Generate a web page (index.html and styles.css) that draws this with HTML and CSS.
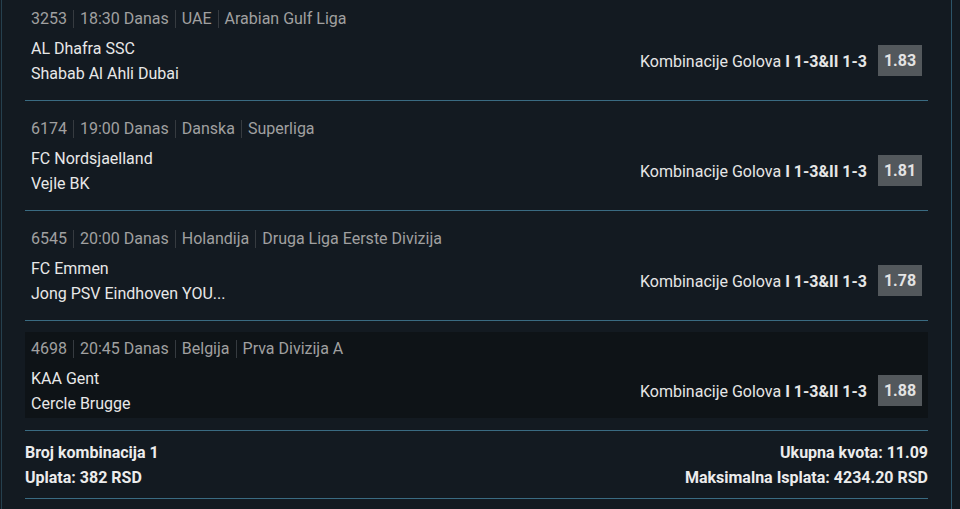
FILE: index.html
```html
<!DOCTYPE html>
<html lang="sr">
<head>
<meta charset="utf-8">
<title>Tiket</title>
<link rel="stylesheet" href="styles.css">
</head>
<body>
<div class="ticket">
  <div class="row">
    <div class="event">
      <div class="meta"><span class="m">3253</span><span class="m">18:30 Danas</span><span class="m">UAE</span><span class="m">Arabian Gulf Liga</span></div>
      <div class="body">
        <div class="teams"><div class="team">AL Dhafra SSC</div><div class="team">Shabab Al Ahli Dubai</div></div>
        <div class="bet"><span class="market">Kombinacije Golova <b>I 1-3&amp;II 1-3</b></span><span class="odd">1.83</span></div>
      </div>
    </div>
  </div>
  <div class="row">
    <div class="event">
      <div class="meta"><span class="m">6174</span><span class="m">19:00 Danas</span><span class="m">Danska</span><span class="m">Superliga</span></div>
      <div class="body">
        <div class="teams"><div class="team">FC Nordsjaelland</div><div class="team">Vejle BK</div></div>
        <div class="bet"><span class="market">Kombinacije Golova <b>I 1-3&amp;II 1-3</b></span><span class="odd">1.81</span></div>
      </div>
    </div>
  </div>
  <div class="row">
    <div class="event">
      <div class="meta"><span class="m">6545</span><span class="m">20:00 Danas</span><span class="m">Holandija</span><span class="m">Druga Liga Eerste Divizija</span></div>
      <div class="body">
        <div class="teams"><div class="team">FC Emmen</div><div class="team">Jong PSV Eindhoven YOU...</div></div>
        <div class="bet"><span class="market">Kombinacije Golova <b>I 1-3&amp;II 1-3</b></span><span class="odd">1.78</span></div>
      </div>
    </div>
  </div>
  <div class="row last">
    <div class="event active">
      <div class="meta"><span class="m">4698</span><span class="m">20:45 Danas</span><span class="m">Belgija</span><span class="m">Prva Divizija A</span></div>
      <div class="body">
        <div class="teams"><div class="team">KAA Gent</div><div class="team">Cercle Brugge</div></div>
        <div class="bet"><span class="market">Kombinacije Golova <b>I 1-3&amp;II 1-3</b></span><span class="odd">1.88</span></div>
      </div>
    </div>
  </div>
  <div class="summary">
    <div class="col"><div>Broj kombinacija 1</div><div>Uplata: 382 RSD</div></div>
    <div class="col right"><div>Ukupna kvota: 11.09</div><div>Maksimalna Isplata: 4234.20 RSD</div></div>
  </div>
</div>
</body>
</html>
```

FILE: styles.css
```css
html, body {
  margin: 0;
  padding: 0;
  background: #131a21;
  height: 509px;
  overflow: hidden;
}
body {
  font-family: Roboto, "Liberation Sans", sans-serif;
  font-size: 16px;
  color: #e6e6e6;
}
.ticket {
  margin-left: 1px;
  width: 903px;
  padding: 2px 23px 0 23px;
  border-left: 1px solid #26404e;
  border-right: 1px solid #2c5468;
  height: 507px;
}
.row {
  padding-bottom: 12px;
  border-bottom: 1px solid #3a6b82;
  margin-bottom: 11px;
}
.row.last {
  margin-bottom: 0;
}
.event {
  height: 86px;
  box-sizing: border-box;
  padding: 7px 6px 1px 6px;
}
.event.active {
  background: #0e1317;
}
.meta {
  display: flex;
  height: 20px;
  align-items: center;
  color: #a0a0a0;
  line-height: 18px;
}
.m {
  padding: 0 6px;
  border-left: 1px solid #363b40;
}
.m:first-child {
  padding-left: 0;
  border-left: 0;
}
.body {
  margin-top: 7px;
  display: flex;
  align-items: center;
  justify-content: space-between;
}
.team {
  line-height: 25px;
  color: #e8e8e8;
}
.bet {
  display: flex;
  align-items: center;
  gap: 11px;
}
.market b {
  font-weight: 700;
}
.odd {
  width: 44px;
  height: 31px;
  line-height: 31px;
  text-align: center;
  background: #53585c;
  font-weight: 700;
  color: #e4e4e4;
  margin-top: -1px;
}
.summary {
  display: flex;
  justify-content: space-between;
  padding: 9px 0 8px;
  border-bottom: 1px solid #3a6b82;
  font-weight: 700;
  line-height: 25px;
  color: #ececec;
}
.right {
  text-align: right;
}
```
